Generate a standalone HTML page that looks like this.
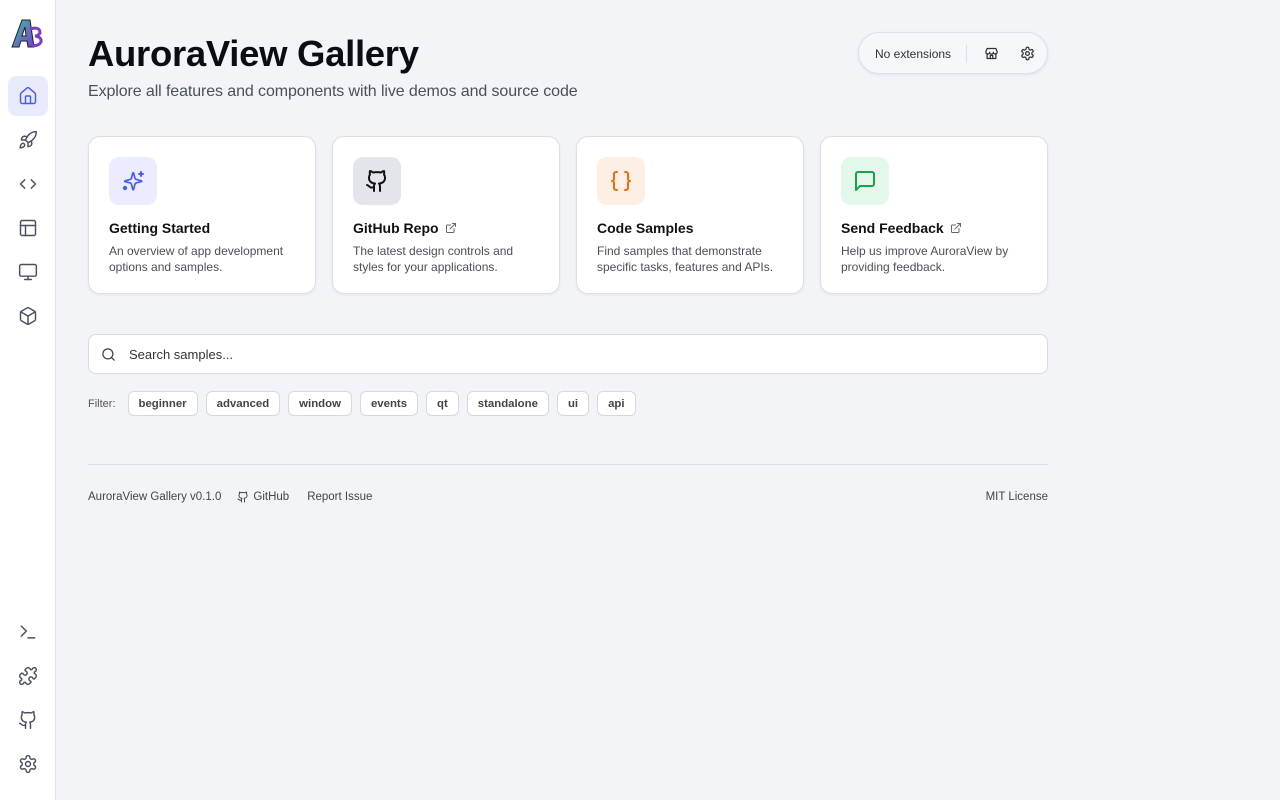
<!DOCTYPE html>
<html><head><meta charset="utf-8">
<style>
*{box-sizing:border-box;margin:0;padding:0}
body{width:1280px;height:800px;background:#f3f4f8;font-family:"Liberation Sans",sans-serif;color:#111;position:relative;overflow:hidden}
.side{position:absolute;left:0;top:0;width:56px;height:800px;background:#fff;border-right:1px solid #e2e4ea}
.si{position:absolute;left:8px;width:40px;height:40px;border-radius:8px;display:flex;align-items:center;justify-content:center}
.si svg{width:20px;height:20px;fill:none;stroke:#4b5060;stroke-width:1.75;stroke-linecap:round;stroke-linejoin:round}
.si.act{background:#e9ebfd}.si.act svg{stroke:#4a5cf0}
h1{position:absolute;left:88px;top:33px;font-size:36.5px;font-weight:700;letter-spacing:-0.3px;color:#0b0d14}
.sub{position:absolute;left:88px;top:83px;font-size:16px;letter-spacing:-0.1px;color:#4a4f5c}
.pill{position:absolute;left:858px;top:32px;width:190px;height:42px;border:1px solid #dcdfe6;border-radius:21px;background:#f6f7fa;box-shadow:0 1px 3px rgba(0,0,0,.08)}
.pill span{position:absolute;left:16px;top:14px;font-size:12px;color:#333}
.pill .dv{position:absolute;left:107px;top:12px;width:1px;height:18px;background:#dcdfe6}
.pill svg{position:absolute;top:13px;width:15px;height:15px;fill:none;stroke:#333;stroke-width:2;stroke-linecap:round;stroke-linejoin:round}
.card{position:absolute;top:136px;width:228px;height:158px;background:#fff;border:1px solid #dcdfe6;border-radius:12px;box-shadow:0 1px 3px rgba(0,0,0,.06)}
.ib{position:absolute;left:20px;top:20px;width:48px;height:48px;border-radius:10px;display:flex;align-items:center;justify-content:center}
.ib svg{width:24px;height:24px;fill:none;stroke-width:2;stroke-linecap:round;stroke-linejoin:round}
.ct{position:absolute;left:20px;top:83px;font-size:14px;font-weight:700;color:#111;display:flex;align-items:center;gap:6px}
.ct svg{width:12px;height:12px;fill:none;stroke:#666;stroke-width:2;stroke-linecap:round;stroke-linejoin:round}
.cd{position:absolute;left:20px;top:106px;width:185px;font-size:12px;line-height:16px;color:#4a4f5c}
.search{position:absolute;left:88px;top:334px;width:960px;height:40px;background:#fff;border:1px solid #d6d9e0;border-radius:8px}
.search svg{position:absolute;left:12px;top:12px;width:15px;height:15px;fill:none;stroke:#444;stroke-width:2;stroke-linecap:round}
.search span{position:absolute;left:40px;top:12px;font-size:13px;color:#333}
.filter{position:absolute;left:88px;top:391px;display:flex;align-items:center;gap:8px;font-size:12px}
.filter .l{color:#555;font-size:11px;margin-right:4px}
.chip{height:25px;padding:0 10px;border:1px solid #d6d9e0;border-radius:6px;background:#fff;font-size:11.4px;font-weight:700;color:#444;display:flex;align-items:center}
.hr{position:absolute;left:88px;top:464px;width:960px;height:1px;background:#dcdfe6}
.foot{position:absolute;top:491px;font-size:11.5px;color:#444;display:flex;align-items:center;gap:4px}
</style></head><body>
<div class="side">
<svg style="position:absolute;left:10px;top:17px" width="36" height="32" viewBox="0 0 36 32">
<defs><linearGradient id="g" x1="0" y1="0" x2="1" y2="1"><stop offset="0" stop-color="#39c0a8"/><stop offset="1" stop-color="#7b3fc8"/></linearGradient></defs>
<path d="M2 30 L12 3 L20 3 L24 30 L18 30 L17 24 L11 24 L9 30 Z M12 19 L16 19 L15 10 Z" fill="url(#g)" stroke="#222" stroke-width="1"/>
<path d="M20 12 q10 -3 10 4 q-2 3 -5 3 q7 1 6 6 q-3 5 -10 3" fill="none" stroke="#7b3fc8" stroke-width="3"/>
</svg>
<div class="si act" style="top:76px"><svg viewBox="0 0 24 24"><path d="M15 21v-8a1 1 0 0 0-1-1h-4a1 1 0 0 0-1 1v8"/><path d="M3 10a2 2 0 0 1 .709-1.528l7-5.999a2 2 0 0 1 2.582 0l7 5.999A2 2 0 0 1 21 10v9a2 2 0 0 1-2 2H5a2 2 0 0 1-2-2z"/></svg></div>
<div class="si" style="top:120px"><svg viewBox="0 0 24 24"><path d="M4.5 16.5c-1.5 1.26-2 5-2 5s3.740-.5 5-2c.71-.84.7-2.130-.09-2.910a2.18 2.18 0 0 0-2.910-.09z"/><path d="m12 15-3-3a22 22 0 0 1 2-3.95A12.88 12.88 0 0 1 22 2c0 2.72-.78 7.5-6 11a22.35 22.35 0 0 1-4 2z"/><path d="M9 12H4s.55-3.03 2-4c1.62-1.08 5 0 5 0"/><path d="M12 15v5s3.03-.55 4-2c1.08-1.62 0-5 0-5"/></svg></div>
<div class="si" style="top:164px"><svg viewBox="0 0 24 24"><path d="m16 17 5-5-5-5"/><path d="m8 7-5 5 5 5"/></svg></div>
<div class="si" style="top:208px"><svg viewBox="0 0 24 24"><rect width="18" height="18" x="3" y="3" rx="2"/><path d="M3 9h18"/><path d="M9 21V9"/></svg></div>
<div class="si" style="top:252px"><svg viewBox="0 0 24 24"><rect width="20" height="14" x="2" y="3" rx="2"/><path d="M8 21h8M12 17v4"/></svg></div>
<div class="si" style="top:296px"><svg viewBox="0 0 24 24"><path d="M21 8a2 2 0 0 0-1-1.730l-7-4a2 2 0 0 0-2 0l-7 4A2 2 0 0 0 3 8v8a2 2 0 0 0 1 1.73l7 4a2 2 0 0 0 2 0l7-4A2 2 0 0 0 21 16Z"/><path d="m3.3 7 8.7 5 8.7-5"/><path d="M12 22V12"/></svg></div>
<div class="si" style="top:612px"><svg viewBox="0 0 24 24"><path d="m4 17 6-6-6-6"/><path d="M12 19h8"/></svg></div>
<div class="si" style="top:656px"><svg viewBox="0 0 24 24"><path d="M19.439 7.85c-.049.322.059.648.289.878l1.568 1.568c.47.47.706 1.087.706 1.704s-.235 1.233-.706 1.704l-1.611 1.611a.98.98 0 0 1-.837.276c-.47-.07-.802-.48-.968-.925a2.501 2.501 0 1 0-3.214 3.214c.446.166.855.497.925.968a.979.979 0 0 1-.276.837l-1.61 1.61a2.404 2.404 0 0 1-1.705.707 2.402 2.402 0 0 1-1.704-.706l-1.568-1.568a1.026 1.026 0 0 0-.877-.29c-.493.074-.84.504-1.02.968a2.5 2.5 0 1 1-3.237-3.237c.464-.18.894-.527.967-1.020a1.026 1.026 0 0 0-.289-.877l-1.568-1.568A2.402 2.402 0 0 1 1.998 12c0-.617.236-1.234.706-1.704L4.23 8.77c.24-.24.581-.353.917-.303.515.077.877.528 1.073 1.01a2.5 2.5 0 1 0 3.259-3.259c-.482-.196-.933-.558-1.010-1.073-.05-.336.062-.676.303-.917l1.525-1.525A2.402 2.402 0 0 1 12 1.998c.617 0 1.234.236 1.704.706l1.568 1.568c.23.23.556.338.877.29.493-.074.84-.504 1.02-.968a2.5 2.5 0 1 1 3.237 3.237c-.464.18-.894.527-.967 1.02Z"/></svg></div>
<div class="si" style="top:700px"><svg viewBox="0 0 24 24"><path d="M15 22v-4a4.8 4.8 0 0 0-1-3.5c3 0 6-2 6-5.5.08-1.25-.27-2.48-1-3.5.28-1.15.28-2.35 0-3.5 0 0-1 0-3 1.5-2.64-.5-5.36-.5-8 0C6 2 5 2 5 2c-.3 1.15-.3 2.35 0 3.5A5.403 5.403 0 0 0 4 9c0 3.5 3 5.5 6 5.5-.39.49-.68 1.05-.85 1.65-.17.6-.22 1.23-.15 1.85v4"/><path d="M9 18c-4.51 2-5-2-7-2"/></svg></div>
<div class="si" style="top:744px"><svg viewBox="0 0 24 24"><path d="M12.22 2h-.44a2 2 0 0 0-2 2v.18a2 2 0 0 1-1 1.73l-.43.25a2 2 0 0 1-2 0l-.15-.08a2 2 0 0 0-2.73.73l-.22.38a2 2 0 0 0 .73 2.73l.15.1a2 2 0 0 1 1 1.72v.51a2 2 0 0 1-1 1.74l-.15.09a2 2 0 0 0-.73 2.73l.22.38a2 2 0 0 0 2.73.73l.15-.08a2 2 0 0 1 2 0l.43.25a2 2 0 0 1 1 1.73V20a2 2 0 0 0 2 2h.44a2 2 0 0 0 2-2v-.18a2 2 0 0 1 1-1.73l.43-.25a2 2 0 0 1 2 0l.15.08a2 2 0 0 0 2.73-.73l.22-.39a2 2 0 0 0-.73-2.73l-.15-.08a2 2 0 0 1-1-1.74v-.5a2 2 0 0 1 1-1.74l.15-.09a2 2 0 0 0 .73-2.73l-.22-.38a2 2 0 0 0-2.73-.73l-.15.08a2 2 0 0 1-2 0l-.43-.25a2 2 0 0 1-1-1.73V4a2 2 0 0 0-2-2z"/><circle cx="12" cy="12" r="3"/></svg></div>
</div>

<h1>AuroraView Gallery</h1>
<div class="sub">Explore all features and components with live demos and source code</div>

<div class="pill"><span>No extensions</span><div class="dv"></div>
<svg style="left:125px" viewBox="0 0 24 24"><path d="M3 9l2-5h14l2 5v1a3 3 0 0 1-6 0 3 3 0 0 1-6 0 3 3 0 0 1-6 0z"/><path d="M5 12v8h14v-8"/><path d="M10 20v-5h4v5"/></svg>
<svg style="left:161px" viewBox="0 0 24 24"><path d="M12.22 2h-.44a2 2 0 0 0-2 2v.18a2 2 0 0 1-1 1.73l-.43.25a2 2 0 0 1-2 0l-.15-.08a2 2 0 0 0-2.73.73l-.22.38a2 2 0 0 0 .73 2.73l.15.1a2 2 0 0 1 1 1.72v.51a2 2 0 0 1-1 1.74l-.15.09a2 2 0 0 0-.73 2.73l.22.38a2 2 0 0 0 2.73.73l.15-.08a2 2 0 0 1 2 0l.43.25a2 2 0 0 1 1 1.73V20a2 2 0 0 0 2 2h.44a2 2 0 0 0 2-2v-.18a2 2 0 0 1 1-1.73l.43-.25a2 2 0 0 1 2 0l.15.08a2 2 0 0 0 2.73-.73l.22-.39a2 2 0 0 0-.73-2.730l-.15-.08a2 2 0 0 1-1-1.74v-.5a2 2 0 0 1 1-1.74l.15-.09a2 2 0 0 0 .73-2.73l-.22-.38a2 2 0 0 0-2.73-.73l-.15.08a2 2 0 0 1-2 0l-.43-.25a2 2 0 0 1-1-1.73V4a2 2 0 0 0-2-2z"/><circle cx="12" cy="12" r="3"/></svg>
</div>

<div class="card" style="left:88px"><div class="ib" style="background:#ebedfe"><svg viewBox="0 0 24 24" stroke="#4a5cf0"><path d="M9.937 15.5A2 2 0 0 0 8.5 14.063l-6.135-1.582a.5.5 0 0 1 0-.962L8.5 9.936A2 2 0 0 0 9.937 8.5l1.582-6.135a.5.5 0 0 1 .963 0L14.063 8.5A2 2 0 0 0 15.5 9.937l6.135 1.581a.5.5 0 0 1 0 .964L15.5 14.063a2 2 0 0 0-1.437 1.437l-1.582 6.135a.5.5 0 0 1-.963 0z" transform="translate(2 2) scale(.85)"/><path d="M20 3v4M22 5h-4"/><circle cx="4" cy="19" r="1.2"/></svg></div>
<div class="ct">Getting Started</div><div class="cd">An overview of app development options and samples.</div></div>

<div class="card" style="left:332px"><div class="ib" style="background:#e3e5ea"><svg viewBox="0 0 24 24" stroke="#111"><path d="M15 22v-4a4.8 4.8 0 0 0-1-3.5c3 0 6-2 6-5.5.08-1.25-.27-2.48-1-3.5.28-1.15.28-2.35 0-3.5 0 0-1 0-3 1.5-2.64-.5-5.36-.5-8 0C6 2 5 2 5 2c-.3 1.15-.3 2.35 0 3.5A5.403 5.403 0 0 0 4 9c0 3.5 3 5.5 6 5.5-.39.49-.68 1.05-.85 1.65-.17.6-.22 1.23-.15 1.85v4"/><path d="M9 18c-4.51 2-5-2-7-2"/></svg></div>
<div class="ct">GitHub Repo <svg viewBox="0 0 24 24"><path d="M15 3h6v6"/><path d="M10 14 21 3"/><path d="M18 13v6a2 2 0 0 1-2 2H5a2 2 0 0 1-2-2V8a2 2 0 0 1 2-2h6"/></svg></div><div class="cd">The latest design controls and styles for your applications.</div></div>

<div class="card" style="left:576px"><div class="ib" style="background:#feefe4"><svg viewBox="0 0 24 24" stroke="#f26b0f"><path d="M8 3H7a2 2 0 0 0-2 2v5a2 2 0 0 1-2 2 2 2 0 0 1 2 2v5c0 1.1.9 2 2 2h1"/><path d="M16 21h1a2 2 0 0 0 2-2v-5c0-1.1.9-2 2-2a2 2 0 0 1-2-2V5a2 2 0 0 0-2-2h-1"/></svg></div>
<div class="ct">Code Samples</div><div class="cd">Find samples that demonstrate specific tasks, features and APIs.</div></div>

<div class="card" style="left:820px"><div class="ib" style="background:#e3f8ea"><svg viewBox="0 0 24 24" stroke="#16a34a"><path d="M21 15a2 2 0 0 1-2 2H7l-4 4V5a2 2 0 0 1 2-2h14a2 2 0 0 1 2 2z"/></svg></div>
<div class="ct">Send Feedback <svg viewBox="0 0 24 24"><path d="M15 3h6v6"/><path d="M10 14 21 3"/><path d="M18 13v6a2 2 0 0 1-2 2H5a2 2 0 0 1-2-2V8a2 2 0 0 1 2-2h6"/></svg></div><div class="cd">Help us improve AuroraView by providing feedback.</div></div>

<div class="search"><svg viewBox="0 0 24 24"><circle cx="11" cy="11" r="8"/><path d="m21 21-4.3-4.3"/></svg><span>Search samples...</span></div>

<div class="filter"><span class="l">Filter:</span><span class="chip">beginner</span><span class="chip">advanced</span><span class="chip">window</span><span class="chip">events</span><span class="chip">qt</span><span class="chip">standalone</span><span class="chip">ui</span><span class="chip">api</span></div>

<div class="hr"></div>
<div class="foot" style="left:88px">AuroraView Gallery v0.1.0
<svg style="margin-left:12px" width="12" height="12" viewBox="0 0 24 24" fill="none" stroke="#444" stroke-width="2" stroke-linecap="round" stroke-linejoin="round"><path d="M15 22v-4a4.8 4.8 0 0 0-1-3.5c3 0 6-2 6-5.5.08-1.25-.27-2.48-1-3.5.28-1.15.28-2.35 0-3.5 0 0-1 0-3 1.5-2.64-.5-5.36-.5-8 0C6 2 5 2 5 2c-.3 1.15-.3 2.35 0 3.5A5.403 5.403 0 0 0 4 9c0 3.5 3 5.5 6 5.5-.39.49-.68 1.050-.85 1.65-.17.6-.22 1.23-.15 1.85v4"/><path d="M9 18c-4.51 2-5-2-7-2"/></svg>GitHub<span style="margin-left:14px">Report Issue</span></div>
<div class="foot" style="right:232px">MIT License</div>
</body></html>
